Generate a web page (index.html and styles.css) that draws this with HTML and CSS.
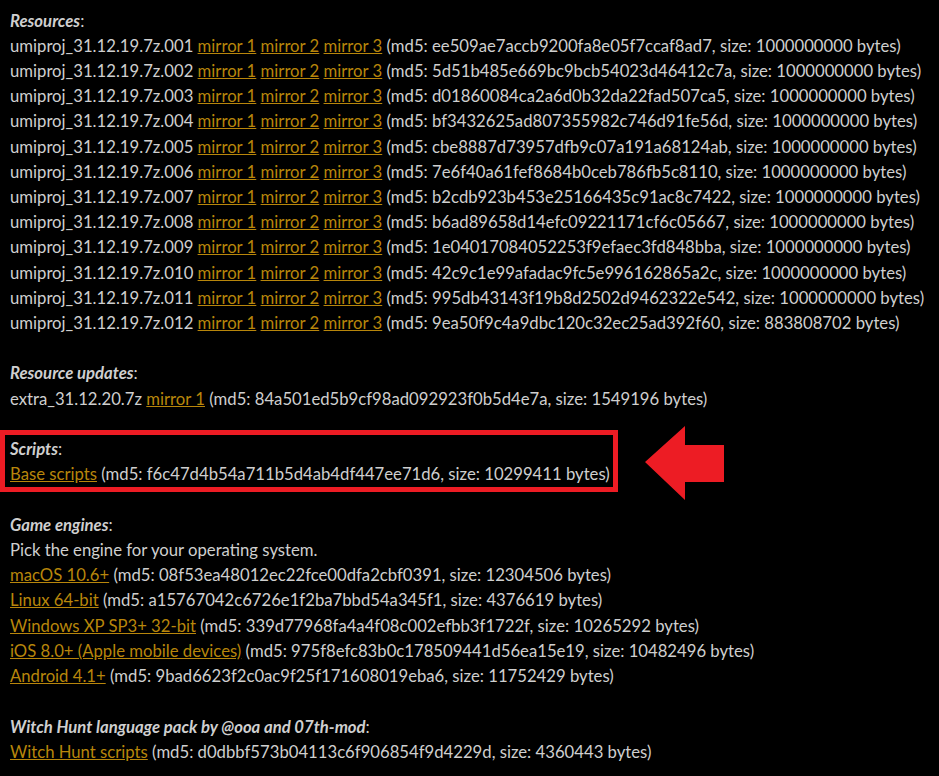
FILE: index.html
```html
<!DOCTYPE html>
<html>
<head>
<meta charset="utf-8">
<link rel="stylesheet" href="styles.css">
</head>
<body>
<div class="page">
  <section class="group">
    <div class="head"><em>Resources</em>:</div>
    <div>umiproj_31.12.19.7z.001 <a href="#">mirror 1</a> <a href="#">mirror 2</a> <a href="#">mirror 3</a> (md5: ee509ae7accb9200fa8e05f7ccaf8ad7, size: 1000000000 bytes)</div>
    <div>umiproj_31.12.19.7z.002 <a href="#">mirror 1</a> <a href="#">mirror 2</a> <a href="#">mirror 3</a> (md5: 5d51b485e669bc9bcb54023d46412c7a, size: 1000000000 bytes)</div>
    <div>umiproj_31.12.19.7z.003 <a href="#">mirror 1</a> <a href="#">mirror 2</a> <a href="#">mirror 3</a> (md5: d01860084ca2a6d0b32da22fad507ca5, size: 1000000000 bytes)</div>
    <div>umiproj_31.12.19.7z.004 <a href="#">mirror 1</a> <a href="#">mirror 2</a> <a href="#">mirror 3</a> (md5: bf3432625ad807355982c746d91fe56d, size: 1000000000 bytes)</div>
    <div>umiproj_31.12.19.7z.005 <a href="#">mirror 1</a> <a href="#">mirror 2</a> <a href="#">mirror 3</a> (md5: cbe8887d73957dfb9c07a191a68124ab, size: 1000000000 bytes)</div>
    <div>umiproj_31.12.19.7z.006 <a href="#">mirror 1</a> <a href="#">mirror 2</a> <a href="#">mirror 3</a> (md5: 7e6f40a61fef8684b0ceb786fb5c8110, size: 1000000000 bytes)</div>
    <div>umiproj_31.12.19.7z.007 <a href="#">mirror 1</a> <a href="#">mirror 2</a> <a href="#">mirror 3</a> (md5: b2cdb923b453e25166435c91ac8c7422, size: 1000000000 bytes)</div>
    <div>umiproj_31.12.19.7z.008 <a href="#">mirror 1</a> <a href="#">mirror 2</a> <a href="#">mirror 3</a> (md5: b6ad89658d14efc09221171cf6c05667, size: 1000000000 bytes)</div>
    <div>umiproj_31.12.19.7z.009 <a href="#">mirror 1</a> <a href="#">mirror 2</a> <a href="#">mirror 3</a> (md5: 1e04017084052253f9efaec3fd848bba, size: 1000000000 bytes)</div>
    <div>umiproj_31.12.19.7z.010 <a href="#">mirror 1</a> <a href="#">mirror 2</a> <a href="#">mirror 3</a> (md5: 42c9c1e99afadac9fc5e996162865a2c, size: 1000000000 bytes)</div>
    <div>umiproj_31.12.19.7z.011 <a href="#">mirror 1</a> <a href="#">mirror 2</a> <a href="#">mirror 3</a> (md5: 995db43143f19b8d2502d9462322e542, size: 1000000000 bytes)</div>
    <div>umiproj_31.12.19.7z.012 <a href="#">mirror 1</a> <a href="#">mirror 2</a> <a href="#">mirror 3</a> (md5: 9ea50f9c4a9dbc120c32ec25ad392f60, size: 883808702 bytes)</div>
  </section>
  <section class="group">
    <div class="head"><em>Resource updates</em>:</div>
    <div>extra_31.12.20.7z <a href="#">mirror 1</a> (md5: 84a501ed5b9cf98ad092923f0b5d4e7a, size: 1549196 bytes)</div>
  </section>
  <section class="group">
    <div class="head"><em>Scripts</em>:</div>
    <div><a href="#">Base scripts</a> (md5: f6c47d4b54a711b5d4ab4df447ee71d6, size: 10299411 bytes)</div>
  </section>
  <section class="group">
    <div class="head"><em>Game engines</em>:</div>
    <div>Pick the engine for your operating system.</div>
    <div><a href="#">macOS 10.6+</a> (md5: 08f53ea48012ec22fce00dfa2cbf0391, size: 12304506 bytes)</div>
    <div><a href="#">Linux 64-bit</a> (md5: a15767042c6726e1f2ba7bbd54a345f1, size: 4376619 bytes)</div>
    <div><a href="#">Windows XP SP3+ 32-bit</a> (md5: 339d77968fa4a4f08c002efbb3f1722f, size: 10265292 bytes)</div>
    <div><a href="#">iOS 8.0+ (Apple mobile devices)</a> (md5: 975f8efc83b0c178509441d56ea15e19, size: 10482496 bytes)</div>
    <div><a href="#">Android 4.1+</a> (md5: 9bad6623f2c0ac9f25f171608019eba6, size: 11752429 bytes)</div>
  </section>
  <section class="group">
    <div class="head"><em>Witch Hunt language pack by @ooa and 07th-mod</em>:</div>
    <div><a href="#">Witch Hunt scripts</a> (md5: d0dbbf573b04113c6f906854f9d4229d, size: 4360443 bytes)</div>
  </section>
</div>
<div class="highlight"></div>
<svg class="arrow" width="82" height="76" viewBox="0 0 82 76"><polygon points="3,36 43,0 43,19 82,19 82,56 43,56 43,74" fill="#ed1c24"/></svg>
</body>
</html>
```
FILE: styles.css
```css
html, body {
  margin: 0;
  padding: 0;
  background: #000;
}
body {
  font-family: Lato, "Open Sans", sans-serif;
  font-size: 16.7px;
  line-height: 25.2px;
  color: #cfcfcf;
  position: relative;
  min-height: 776px;
}
.page {
  padding: 8.5px 10px 0 10px;
  display: flex;
  flex-direction: column;
  gap: 25.3px;
}
.group div {
  white-space: nowrap;
}
.head em {
  font-weight: bold;
  font-style: italic;
}
a {
  color: #b8860b;
  text-decoration: underline;
}
.highlight {
  position: absolute;
  left: 0;
  top: 430px;
  width: 608px;
  height: 52px;
  border: 5px solid #ed1c24;
}
.arrow {
  position: absolute;
  left: 642px;
  top: 426px;
}
```
